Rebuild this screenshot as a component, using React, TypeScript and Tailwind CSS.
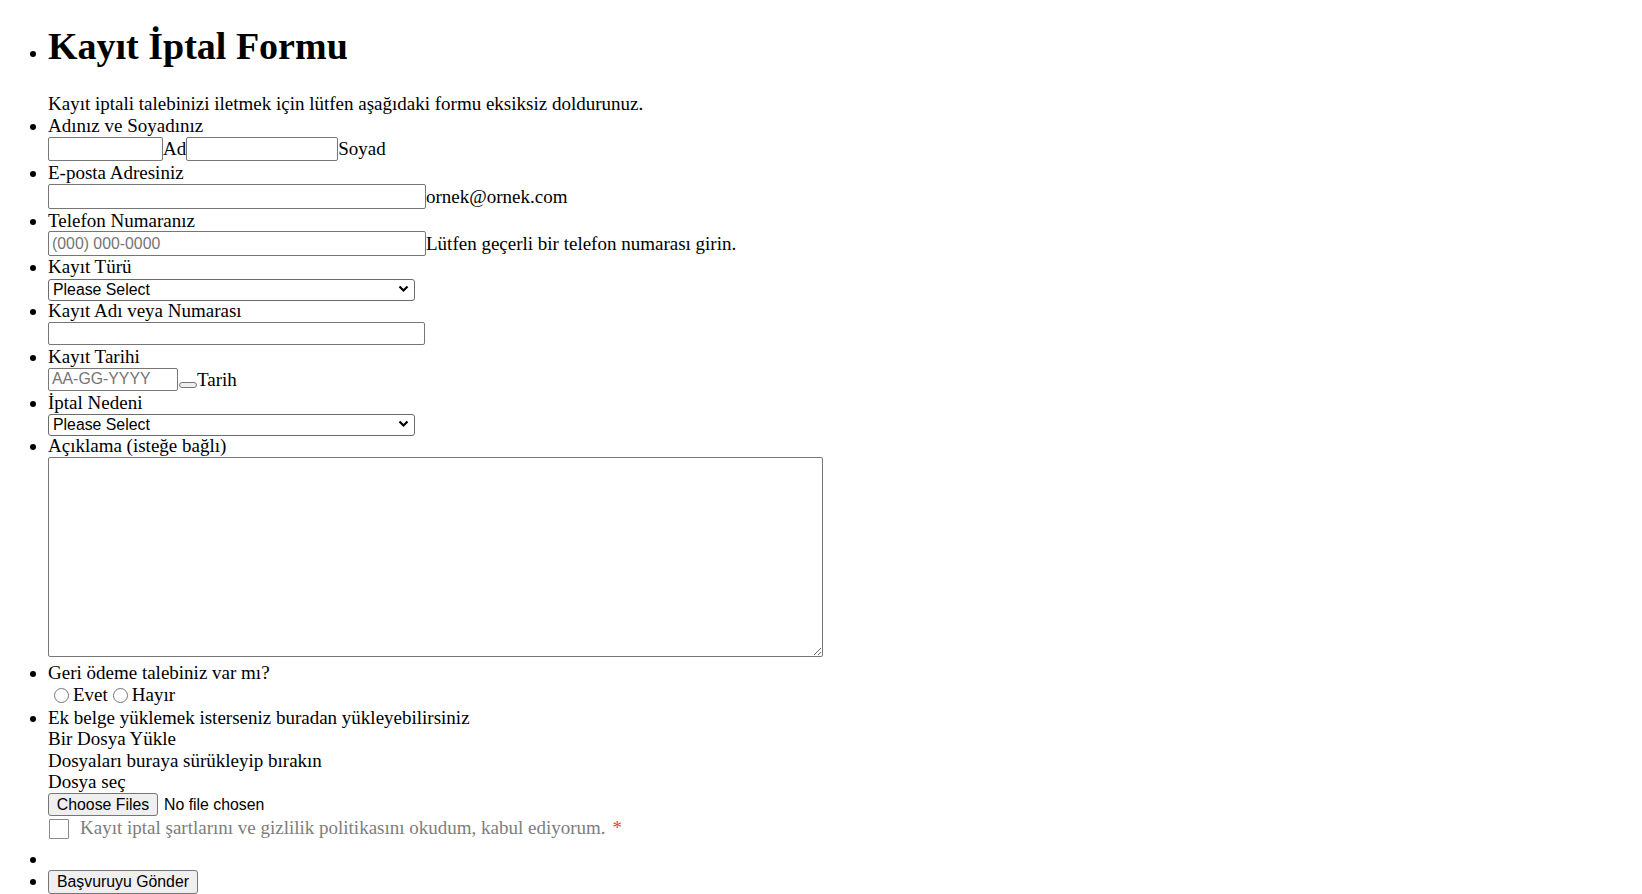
import React from "react";

const inputCls =
  "border border-[#767676] rounded-[2px] bg-white px-[3px] font-['Liberation_Sans',Arial,sans-serif] text-[15.83px] leading-[18px] text-black placeholder:text-[#757575] outline-none";

const btnCls =
  "border border-[#767676] rounded-[3px] bg-[#efefef] font-['Liberation_Sans',Arial,sans-serif] text-[15.83px] leading-[18px] text-black";

function Select() {
  return (
    <div className="relative w-[367px] h-[22px]">
      <select className="appearance-none w-full h-full border border-[#6b6b6b] rounded-[3px] bg-white pl-[4px] font-['Liberation_Sans',Arial,sans-serif] text-[15.83px] leading-[18px] text-black">
        <option>Please Select</option>
      </select>
      <svg
        className="absolute right-[6px] top-[7px] pointer-events-none"
        width="11"
        height="8"
        viewBox="0 0 11 8"
      >
        <polyline points="1.5,1.5 5.5,5.5 9.5,1.5" fill="none" stroke="#000" strokeWidth="2.2" />
      </svg>
    </div>
  );
}

export default function App() {
  return (
    <div className="min-h-screen bg-white text-black font-['Liberation_Serif','Times_New_Roman',serif] text-[19px] leading-[21.5px]">
      <ul className="list-disc pl-[48px] m-0">
        <li>
          <h1 className="text-[38px] font-bold leading-[43px] pt-[25px] pb-[25px]">Kayıt İptal Formu</h1>
          <div>Kayıt iptali talebinizi iletmek için lütfen aşağıdaki formu eksiksiz doldurunuz.</div>
        </li>
        <li>
          <div>Adınız ve Soyadınız</div>
          <div className="flex items-center h-[26px]">
            <input className={`${inputCls} w-[115px] h-[24px]`} />
            <span>Ad</span>
            <input className={`${inputCls} w-[152px] h-[24px]`} />
            <span>Soyad</span>
          </div>
        </li>
        <li>
          <div>E-posta Adresiniz</div>
          <div className="flex items-center h-[26px]">
            <input className={`${inputCls} w-[378px] h-[24.5px]`} />
            <span>ornek@ornek.com</span>
          </div>
        </li>
        <li>
          <div>Telefon Numaranız</div>
          <div className="flex items-center h-[25px]">
            <input className={`${inputCls} w-[378px] h-[24.5px]`} placeholder="(000) 000-0000" />
            <span>Lütfen geçerli bir telefon numarası girin.</span>
          </div>
        </li>
        <li>
          <div>Kayıt Türü</div>
          <div className="flex items-center h-[22px]">
            <Select />
          </div>
        </li>
        <li>
          <div>Kayıt Adı veya Numarası</div>
          <div className="flex items-center h-[25px]">
            <input className={`${inputCls} w-[377px] h-[23.7px]`} />
          </div>
        </li>
        <li>
          <div>Kayıt Tarihi</div>
          <div className="flex items-center h-[24px]">
            <input className={`${inputCls} w-[130px] h-[22.3px]`} placeholder="AA-GG-YYYY" />
            <button className="self-end mb-[4px] ml-[1px] w-[18px] h-[6px] border border-[#767676] rounded-[3px] bg-[#efefef]"></button>
            <span>Tarih</span>
          </div>
        </li>
        <li>
          <div>İptal Nedeni</div>
          <div className="flex items-center h-[22px]">
            <Select />
          </div>
        </li>
        <li>
          <div>Açıklama (isteğe bağlı)</div>
          <div className="flex items-start h-[205.5px]">
            <textarea className="mt-[0.5px] w-[775px] h-[200px] border border-[#767676] rounded-[2px] bg-white font-['Liberation_Mono',monospace] text-[15.5px] resize" />
          </div>
        </li>
        <li>
          <div>Geri ödeme talebiniz var mı?</div>
          <div className="flex items-center h-[23px]">
            <input type="radio" name="r" className="w-[15px] h-[15px] ml-[6px] mr-[4px]" />
            <span>Evet</span>
            <input type="radio" name="r" className="w-[15px] h-[15px] ml-[5px] mr-[4px]" />
            <span>Hayır</span>
          </div>
        </li>
        <li>
          <div>Ek belge yüklemek isterseniz buradan yükleyebilirsiniz</div>
          <div>Bir Dosya Yükle</div>
          <div>Dosyaları buraya sürükleyip bırakın</div>
          <div>Dosya seç</div>
          <div className="flex items-center h-[24px]">
            <button className={`${btnCls} w-[110px] h-[22.7px]`}>Choose Files</button>
            <span className="ml-[6px] font-['Liberation_Sans',Arial,sans-serif] text-[15.83px]">No file chosen</span>
          </div>
          <div className="flex items-start h-[31.5px]">
            <input type="checkbox" className="appearance-none mt-[2px] ml-[0.5px] w-[20.5px] h-[20.5px] border border-[#8a8a8a] rounded-[1px] bg-white" />
            <span className="ml-[11px] text-[#7d7d7d]">
              Kayıt iptal şartlarını ve gizlilik politikasını okudum, kabul ediyorum.
            </span>
            <span className="ml-[7px] text-[#f23c3c]">*</span>
          </div>
        </li>
        <li className="h-[21.5px]">{"\u00A0"}</li>
        <li className="h-[24px]">
          <button className={`${btnCls} w-[150px] h-[24px]`}>Başvuruyu Gönder</button>
        </li>
      </ul>
    </div>
  );
}
